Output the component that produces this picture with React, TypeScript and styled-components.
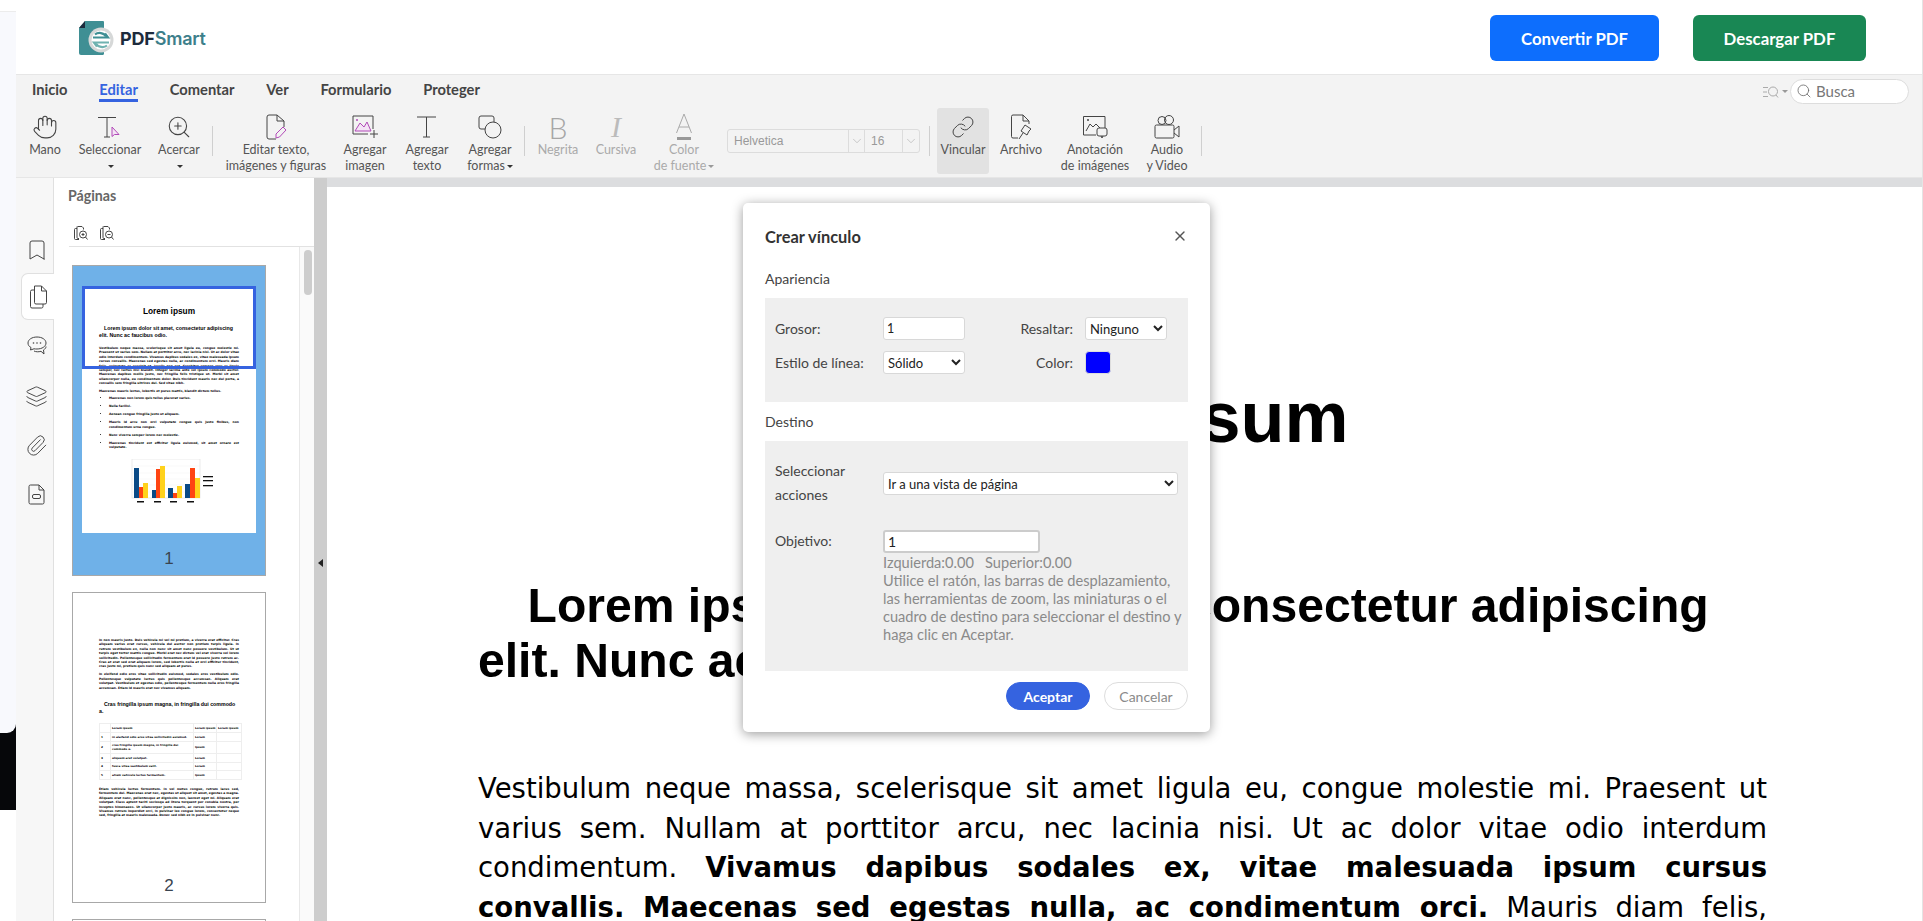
import React from 'react';
import styled, { createGlobalStyle } from 'styled-components';
import {
    Bookmark,
    ChevronDown,
    Hand,
    Layers,
    Link,
    Paperclip,
    Search,
    X,
    ZoomIn,
} from 'lucide-react';

const UI_FONT = "Lato, 'Noto Sans', sans-serif";

const GlobalStyle = createGlobalStyle`
    html, body {
        margin: 0;
        height: 100%;
        overflow: hidden;
        background: #fff;
    }
    * { box-sizing: border-box; }
    body { font-family: ${UI_FONT}; }
`;

const Page = styled.div`
    position: relative;
    display: flex;
    width: 100vw;
    height: 100vh;
    overflow: hidden;
    border-right: 1px solid #e4e4e4;
`;

const LeftEdge = styled.div`
    flex: 0 0 16px;
    display: flex;
    flex-direction: column;
    background: #fff;
`;

const EdgeLight = styled.div`
    position: relative;
    height: 722px;
    margin-top: 11px;
    background: #f8f9fd;
    border-top: 1px solid #ececec;
    border-bottom-right-radius: 9px;
`;

const EdgeDark = styled.div`
    height: 86px;
    margin-top: -9px;
    background: #06070a;
`;

const Main = styled.div`
    flex: 1;
    min-width: 0;
    display: flex;
    flex-direction: column;
`;

const Header = styled.header`
    flex: 0 0 75px;
    display: flex;
    align-items: flex-start;
    justify-content: space-between;
    padding: 15px 56px 0 63px;
    background: #fff;
    border-bottom: 1px solid #e6e6e6;
`;

const Logo = styled.div`
    display: flex;
    align-items: center;
    gap: 6px;
    margin-top: 6px;
`;

const LogoText = styled.div`
    font-family: Inter, sans-serif;
    font-weight: 700;
    font-size: 18px;
    letter-spacing: -0.2px;
    color: #1d2b3d;
`;

const LogoAccent = styled.span`
    color: #3d7f8b;
    font-weight: 600;
`;

const HeaderActions = styled.div`
    display: flex;
    gap: 34px;
`;

const CtaButton = styled.button<{ $tone: string; $width: number }>`
    width: ${({ $width }) => $width}px;
    height: 46px;
    border: 0;
    border-radius: 6px;
    background: ${({ $tone }) => $tone};
    color: #fff;
    font-family: ${UI_FONT};
    font-size: 16.8px;
    font-weight: 700;
`;

const Ribbon = styled.div`
    flex: 0 0 103px;
    display: flex;
    flex-direction: column;
    background: #f3f3f3;
    border-bottom: 1px solid #e6e6e6;
`;

const NavRow = styled.nav`
    height: 33px;
    display: flex;
    align-items: flex-start;
    gap: 31.8px;
    padding: 5px 0 0 16px;
`;

const NavItem = styled.span<{ $active?: boolean }>`
    height: 22px;
    font-size: 14.7px;
    line-height: 18px;
    font-weight: 700;
    color: ${({ $active }) => ($active ? '#3563e0' : '#444')};
    border-bottom: ${({ $active }) => ($active ? '3px solid #3563e0' : '0')};
`;

const NavTail = styled.div`
    margin-left: auto;
    display: flex;
    align-items: center;
    margin-top: -1px;
    color: #aaa;
`;

const ViewToggle = styled.div`
    display: flex;
    align-items: center;
    width: 27px;
    overflow: hidden;
`;

const SmallCaret = styled.i<{ $color?: string }>`
    display: inline-block;
    flex: none;
    margin-left: 2px;
    vertical-align: middle;
    border-left: 3px solid transparent;
    border-right: 3px solid transparent;
    border-top: 3.5px solid ${({ $color }) => $color ?? '#333'};
`;

const SearchBox = styled.div`
    width: 119px;
    height: 25px;
    display: flex;
    align-items: center;
    gap: 4px;
    padding: 0 0 2px 5px;
    background: #fff;
    border: 1px solid #ddd;
    border-radius: 13px;
    font-size: 15px;
    color: #777;
`;

const MoreDots = styled.span`
    width: 13px;
    padding-left: 11px;
    font-size: 14px;
    line-height: 1;
    color: #888;
    overflow: hidden;
`;

const ToolRow = styled.div`
    display: flex;
    align-items: flex-start;
`;

const Tool = styled.div<{ $w: number; $disabled?: boolean; $selected?: boolean; $ml?: number }>`
    flex: 0 0 ${({ $w }) => $w}px;
    height: 66px;
    margin-left: ${({ $ml }) => $ml ?? 0}px;
    display: flex;
    flex-direction: column;
    align-items: center;
    border-radius: 3px;
    font-size: 12.5px;
    line-height: 16px;
    text-align: center;
    white-space: nowrap;
    color: ${({ $disabled }) => ($disabled ? '#aaa' : '#555')};
    background: ${({ $selected }) => ($selected ? '#e2e2e2' : 'transparent')};
`;

const IconSlot = styled.div`
    flex: 0 0 34px;
    display: flex;
    align-items: center;
    justify-content: center;
    padding-top: 3px;
`;

const LetterIcon = styled.span<{ $italic?: boolean }>`
    font-family: ${({ $italic }) => ($italic ? "'Liberation Serif', serif" : UI_FONT)};
    font-style: ${({ $italic }) => ($italic ? 'italic' : 'normal')};
    font-weight: 300;
    font-size: 30px;
    line-height: 30px;
    color: ${({ $italic }) => ($italic ? '#bbb' : '#a6a6a6')};
`;

const ToolSep = styled.div<{ $ml?: number }>`
    flex: 0 0 1px;
    height: 30px;
    margin: 18px 0 0 ${({ $ml }) => $ml ?? 0}px;
    background: #cfcfcf;
`;

const FontPicker = styled.div`
    flex: 0 0 192px;
    height: 24px;
    margin-top: 21px;
    display: flex;
    align-items: center;
    border: 1px solid #dcdcdc;
    border-radius: 3px;
    font-family: 'Liberation Sans', sans-serif;
    font-size: 12px;
    color: #999;
`;

const FontField = styled.span<{ $w: number }>`
    flex: 0 0 ${({ $w }) => $w}px;
    padding-left: 6px;
`;

const FontArrow = styled.span`
    flex: 0 0 17px;
    height: 100%;
    display: flex;
    align-items: center;
    justify-content: center;
    border-left: 1px solid #dcdcdc;
    border-right: 1px solid #dcdcdc;
    color: #b5b5b5;
    &:last-child { border-right: 0; }
`;

const Workspace = styled.div`
    flex: 1;
    min-height: 0;
    display: flex;
`;

const Rail = styled.aside`
    flex: 0 0 38px;
    display: flex;
    flex-direction: column;
    align-items: center;
    padding-top: 59px;
    background: #f7f7f7;
    border-right: 1px solid #e0e0e0;
    color: #444;
`;

const RailItem = styled.div<{ $active?: boolean; $gap: number }>`
    flex: 0 0 47px;
    width: ${({ $active }) => ($active ? '33px' : '100%')};
    margin-top: ${({ $gap }) => $gap}px;
    align-self: flex-end;
    margin-right: ${({ $active }) => ($active ? '-1px' : '0')};
    display: flex;
    align-items: center;
    justify-content: center;
    padding-left: ${({ $active }) => ($active ? '0' : '4px')};
    ${({ $active }) =>
        $active &&
        `
        background: #fff;
        border: 1px solid #e0e0e0;
        border-right: 0;
        border-radius: 7px 0 0 7px;
    `}
`;

const PagesPanel = styled.section`
    flex: 0 0 259px;
    display: flex;
    flex-direction: column;
    padding-left: 15px;
    background: #fff;
`;

const PanelTitle = styled.h3`
    margin: 0;
    padding-top: 10px;
    margin-left: -1px;
    font-size: 14.2px;
    line-height: 16px;
    font-weight: 700;
    color: #666;
`;

const PanelTools = styled.div`
    height: 43px;
    display: flex;
    gap: 12px;
    padding: 22px 0 0 5px;
    color: #444;
    border-bottom: 1px solid #e2e2e2;
`;

const ThumbScroller = styled.div`
    flex: 1;
    min-height: 0;
    display: flex;
    overflow: hidden;
`;

const ThumbList = styled.div`
    flex: 0 0 230px;
    padding: 18px 0 0 3px;
    display: flex;
    flex-direction: column;
    gap: 16px;
`;

const ScrollTrack = styled.div`
    flex: 1;
    padding: 3px 2px 0 4px;
    background: #fafafa;
    border-left: 1px solid #e8e8e8;
`;

const ScrollThumb = styled.div`
    width: 8px;
    height: 45px;
    border-radius: 4px;
    background: #cdcdcd;
`;

const Thumb = styled.div<{ $active?: boolean }>`
    position: relative;
    flex: 0 0 311px;
    width: 194px;
    padding: 20px 9px 0;
    border: 1px solid #a8a8a8;
    background: ${({ $active }) => ($active ? '#6fb1e8' : '#fff')};
`;

const ThumbPage = styled.div<{ $pad: number }>`
    position: relative;
    height: 247px;
    padding: ${({ $pad }) => $pad}px 17px 0;
    background: #fff;
    font-family: 'DejaVu Sans', sans-serif;
    font-size: 3.03px;
    line-height: 4.4px;
    font-weight: 700;
    color: #000;
`;

const ViewFrame = styled.div`
    position: absolute;
    left: 0;
    top: 0;
    width: 100%;
    height: 83px;
    border: 3px solid #3563e0;
`;

const ThumbNumber = styled.div`
    position: absolute;
    left: 0;
    right: 0;
    bottom: 6px;
    text-align: center;
    font-family: 'Liberation Sans', sans-serif;
    font-size: 17px;
    line-height: 20px;
    color: #3a4450;
`;

const ThumbTitle = styled.div`
    text-align: center;
    font-family: 'Liberation Sans', sans-serif;
    font-size: 8.3px;
    line-height: 12px;
`;

const ThumbHeading = styled.div<{ $top: number }>`
    margin-top: ${({ $top }) => $top}px;
    text-indent: 5px;
    font-family: 'Liberation Sans', sans-serif;
    font-size: 5.25px;
    line-height: 7px;
`;

const ThumbText = styled.p<{ $top: number }>`
    margin: ${({ $top }) => $top}px 0 0;
    text-align: justify;
`;

const ThumbBullets = styled.ul`
    margin: 3px 0 0;
    padding-left: 10px;
    text-align: justify;
`;

const ThumbBullet = styled.li`
    padding-bottom: 3.7px;
`;

const ThumbChart = styled.svg`
    display: block;
    margin: 6px 0 0 28px;
`;

const ThumbTable = styled.table`
    width: 143px;
    margin-top: 8px;
    border-collapse: collapse;
    table-layout: fixed;
    font-size: 2.8px;
    line-height: 4.2px;
`;

const ThumbCell = styled.td<{ $h?: number; $w?: number }>`
    height: ${({ $h }) => $h ?? 9}px;
    width: ${({ $w }) => ($w ? `${$w}px` : 'auto')};
    padding: 0 1px;
    border: 1px solid #eee;
    vertical-align: middle;
    overflow: hidden;
    white-space: ${({ $w }) => ($w ? 'nowrap' : 'normal')};
`;

const CollapseBar = styled.div`
    flex: 0 0 13px;
    position: relative;
    background: #cdcdcd;
`;

const CollapseArrow = styled.i`
    position: absolute;
    left: 4px;
    top: 381px;
    border-top: 4px solid transparent;
    border-bottom: 4px solid transparent;
    border-right: 5px solid #222;
`;

const DocViewer = styled.main`
    flex: 1;
    min-width: 0;
    overflow: hidden;
    padding: 180px 155px 0 151px;
    background: #fff;
    border-top: 9px solid #dcdddf;
    color: #000;
`;

const DocTitle = styled.h1`
    margin: 0;
    text-align: center;
    font-family: 'Liberation Sans', sans-serif;
    font-size: 72px;
    line-height: 100px;
    font-weight: 700;
`;

const DocHeading = styled.h2`
    margin: 111px 0 0;
    text-indent: 49.500px;
    font-family: 'Liberation Sans', sans-serif;
    font-size: 48.100px;
    line-height: 54.500px;
    font-weight: 700;
`;

const DocBody = styled.p`
    margin: 82px 0 0;
    text-align: justify;
    font-family: 'DejaVu Sans', sans-serif;
    font-size: 27.500px;
    line-height: 39.500px;
`;

const Dialog = styled.div`
    position: absolute;
    left: 743px;
    top: 203px;
    width: 467px;
    height: 529px;
    padding: 0 22px;
    background: #fff;
    border-radius: 5px;
    box-shadow: 0 2px 12px rgba(0, 0, 0, 0.4);
    font-size: 14px;
    color: #444;
`;

const DialogHead = styled.div`
    height: 68px;
    display: flex;
    align-items: center;
    justify-content: space-between;
    padding-bottom: 2px;
`;

const DialogTitle = styled.h2`
    margin: 0;
    font-size: 16.400px;
    font-weight: 700;
    color: #333;
`;

const SectionLabel = styled.div`
    height: 27px;
    font-size: 14px;
    line-height: 16px;
    color: #444;
`;

const SectionBox = styled.div`
    background: #efefef;
`;

const LookGrid = styled(SectionBox)`
    height: 104px;
    margin-bottom: 12px;
    display: grid;
    grid-template-columns: 108px 82px 120px 82px;
    grid-auto-rows: 23px;
    row-gap: 11px;
    align-items: center;
    padding: 19px 0 0 10px;
`;

const RightLabel = styled.label`
    padding-right: 12px;
    text-align: right;
`;

const Field = styled.input<{ $w?: number; $thick?: boolean }>`
    width: ${({ $w }) => ($w ? `${$w}px` : '100%')};
    height: 23px;
    padding: 0 3px;
    border: ${({ $thick }) => ($thick ? '2px solid #ccc' : '1px solid #d8d8d8')};
    border-radius: 3px;
    background: #fff;
    font-family: ${UI_FONT};
    font-size: ${({ $thick }) => ($thick ? '14px' : '12.500px')};
    color: #222;
    outline: none;
`;

const Dropdown = styled.select`
    width: 100%;
    height: 23px;
    padding: 0;
    border: 1px solid #d8d8d8;
    border-radius: 3px;
    background: #fff;
    font-family: ${UI_FONT};
    font-size: 13px;
    color: #222;
`;

const Swatch = styled.div`
    width: 26px;
    height: 23px;
    background: #0000ff;
    border: 1px solid #ddd;
    border-radius: 4px;
`;

const TargetBox = styled(SectionBox)`
    height: 230px;
    padding: 18px 10px 0;
`;

const ActionRow = styled.div`
    display: flex;
    height: 71px;
`;

const ActionLabel = styled.label`
    flex: 0 0 108px;
    line-height: 24px;
`;

const ActionField = styled.div`
    flex: 1;
    padding-top: 13px;
`;

const GoalRow = styled.div`
    display: flex;
`;

const GoalLabel = styled.label`
    flex: 0 0 108px;
    padding-top: 2px;
`;

const GoalHint = styled.div`
    margin-top: 1px;
    font-size: 14.600px;
    line-height: 18px;
    white-space: nowrap;
    color: #8a8a8a;
`;

const DialogFoot = styled.div`
    display: flex;
    justify-content: flex-end;
    gap: 14px;
    padding-top: 11px;
`;

const PillButton = styled.button<{ $primary?: boolean }>`
    width: 84px;
    height: 28px;
    padding: 0;
    border-radius: 14px;
    border: 1px solid ${({ $primary }) => ($primary ? '#3563e0' : '#ddd')};
    background: ${({ $primary }) => ($primary ? '#3563e0' : '#fff')};
    color: ${({ $primary }) => ($primary ? '#fff' : '#8a8a8a')};
    font-family: ${UI_FONT};
    font-size: 14px;
    font-weight: ${({ $primary }) => ($primary ? 700 : 400)};
`;

const INK = '#444';

const LogoMark = () => (
    <svg width="35" height="35" viewBox="0 0 35 35">
        <path d="M6 0H24a1 1 0 0 1 1 1V33a2 2 0 0 1-1 1H2a2 2 0 0 1-2-2V7Z" fill="#3f8f94" />
        <path d="M6 0V7H0Z" fill="#1d2b3d" />
        <circle cx="22" cy="19" r="12.500" fill="#d6d8d8" />
        <circle cx="22" cy="19" r="9.500" fill="#fff" />
        <path d="M16 13.500C19 11 25 11.500 27 15.500" fill="none" stroke="#3f8f94" strokeWidth="2.200" />
        <path d="M14 16.500H29L26 12.500" fill="none" stroke="#3f8f94" strokeWidth="2.200" />
        <path d="M30 21.500H15L18 25.500" fill="none" stroke="#6fb2b0" strokeWidth="2.200" />
        <path d="M28 24.500C25 27 19 26.500 17 22.500" fill="none" stroke="#6fb2b0" strokeWidth="2.200" />
    </svg>
);

const SelectIcon = () => (
    <svg width="26" height="24" viewBox="0 0 26 24" fill="none" stroke={INK}>
        <path d="M1 2.500H19M10 2.500V22M7 22H13" />
        <path d="M15 12V21.500L17.500 19.500H22Z" stroke="#b24ab8" fill="#f4e4f6" />
    </svg>
);

const EditDocIcon = () => (
    <svg width="24" height="26" viewBox="0 0 24 26" fill="none" stroke={INK}>
        <path d="M12 25H5a2 2 0 0 1-2-2V3a2 2 0 0 1 2-2H13L20 7V13" />
        <path d="M13 1V7H20" />
        <path d="M12 24V20L19 13L22 16L15.500 23Z" stroke="#b24ab8" />
    </svg>
);

const AddImageIcon = () => (
    <svg width="28" height="24" viewBox="0 0 28 24" fill="none" stroke={INK}>
        <path d="M17 19H2V1H22V14" />
        <path d="M4 16L9 8L13 12L16 7L20 16Z" stroke="#b24ab8" fill="#f4e4f6" />
        <circle cx="6" cy="5" r="1" fill="#b24ab8" stroke="none" />
        <path d="M23 15V23M19 19H27" />
    </svg>
);

const TextToolIcon = () => (
    <svg width="22" height="24" viewBox="0 0 22 24" fill="none" stroke={INK}>
        <path d="M1 2H20M10.500 2V22M7 22H14" />
    </svg>
);

const ShapesIcon = () => (
    <svg width="26" height="24" viewBox="0 0 26 24" fill="none" stroke={INK}>
        <rect x="2" y="1" width="15" height="13" rx="2" />
        <circle cx="16" cy="15" r="8" fill="#f3f3f3" />
    </svg>
);

const FontColorIcon = () => (
    <svg width="20" height="28" viewBox="0 0 20 28" fill="none" stroke="#aaa">
        <path d="M2.500 20L10 1L17.500 20M5 14H15" />
        <path d="M3 25.500H17" strokeWidth="3" stroke="#999" />
    </svg>
);

const PinDocIcon = () => (
    <svg width="22" height="26" viewBox="0 0 22 26" fill="none" stroke={INK}>
        <path d="M8 24H3a1.500 1.500 0 0 1-1.500-1.500V2.500A1.500 1.500 0 0 1 3 1H13L19 7V10" />
        <path d="M13 1V7H19" />
        <path d="M15 11L21 15L19 17L17 21L11 17L13 14ZM13 19L9 25" />
    </svg>
);

const AnnotateIcon = () => (
    <svg width="26" height="24" viewBox="0 0 26 24" fill="none" stroke={INK}>
        <path d="M14 20H1.500V1.500H23V13" />
        <path d="M4 16L8 9L11 12L14 9L18 13" />
        <circle cx="6" cy="5" r="1" fill={INK} stroke="none" />
        <rect x="15" y="13" width="10" height="8" rx="2" fill="#f3f3f3" />
        <path d="M19 21L20 23L21 21" />
    </svg>
);

const CameraIcon = () => (
    <svg width="26" height="24" viewBox="0 0 26 24" fill="none" stroke={INK}>
        <circle cx="8" cy="5.500" r="4" />
        <circle cx="15" cy="5" r="4.500" />
        <rect x="1" y="10" width="19" height="13" rx="1.500" />
        <path d="M20 15L25 11V22L20 18" />
    </svg>
);

const ViewModeIcon = () => (
    <svg width="17" height="14" viewBox="0 0 17 14" fill="none" stroke="#aaa">
        <path d="M0 2.500H5M0 7H4M0 11.500H5" />
        <circle cx="10" cy="6.500" r="4.500" />
        <path d="M13 10L15 12.500" />
    </svg>
);

const PagesIcon = () => (
    <svg width="19" height="24" viewBox="0 0 19 24" fill="none" stroke={INK}>
        <path d="M5.500 1H12.500L17.500 6V17.500A1.500 1.500 0 0 1 16 19H7A1.500 1.500 0 0 1 5.500 17.500Z" />
        <path d="M12.500 1V6H17.500" />
        <path d="M5.500 5H3A1.500 1.500 0 0 0 1.500 6.500V21.500A1.500 1.500 0 0 0 3 23H12.500A1.500 1.500 0 0 0 14 21.500V19" />
    </svg>
);

const ChatIcon = () => (
    <svg width="20" height="19" viewBox="0 0 20 19" fill="none" stroke={INK}>
        <path d="M10 1C5 1 1 3.500 1 7C1 9 2 10.500 4 11.500L3.500 14L7 12.800C8 13 9 13 10 13C15 13 19 10.500 19 7C19 3.500 15 1 10 1Z" />
        <path d="M7 15C9 16 11.500 16 14 15.300L17 18L16.500 14C18 13 19 12 19 10.500" />
        <circle cx="6.500" cy="7" r=".8" fill={INK} stroke="none" />
        <circle cx="10" cy="7" r=".8" fill={INK} stroke="none" />
        <circle cx="13.500" cy="7" r=".8" fill={INK} stroke="none" />
    </svg>
);

const DocMinusIcon = () => (
    <svg width="17" height="21" viewBox="0 0 17 21" fill="none" stroke={INK}>
        <path d="M2.500 1H11L16 6V18.500A1.500 1.500 0 0 1 14.500 20H2.500A1.500 1.500 0 0 1 1 18.500V2.500A1.500 1.500 0 0 1 2.500 1Z" />
        <path d="M11 1V6H16" />
        <rect x="4.500" y="10.500" width="8" height="4" rx="1.500" />
    </svg>
);

const PageZoomIcon = ({ plus }: { plus?: boolean }) => (
    <svg width="14" height="14" viewBox="0 0 14 14" fill="none" stroke={INK}>
        <path d="M3.500 .5H8L9.500 2V3.500M5 12.500H4A1 1 0 0 1 3 11.500V.5" />
        <path d="M3 2.500H1.500A1 1 0 0 0 .5 3.500V12.500A1 1 0 0 0 1.500 13.500H5" />
        <circle cx="9" cy="8.500" r="3.500" />
        <path d="M11.500 11L13.500 13.500M7.500 8.500H10.500" />
        {plus && <path d="M9 7V10" />}
    </svg>
);

const ChartMini = () => (
    <ThumbChart width="92" height="47" viewBox="0 0 92 47">
        <rect x="5" y="0" width="68" height="39" fill="#fff" stroke="#e2e2e2" strokeWidth=".7" />
        <path d="M5 7H73M5 14H73M5 20H73M5 26H73M5 33H73" stroke="#f0f0f0" strokeWidth=".5" />
        <g fill="#0a4a86">
            <rect x="7" y="9" width="5" height="30" />
            <rect x="25" y="31" width="4" height="8" />
            <rect x="41" y="29" width="5" height="10" />
            <rect x="58" y="25" width="5" height="14" />
        </g>
        <g fill="#ff4412">
            <rect x="12" y="28" width="4" height="11" />
            <rect x="29" y="10" width="4" height="29" />
            <rect x="46" y="34" width="4" height="5" />
            <rect x="63" y="9" width="5" height="30" />
        </g>
        <g fill="#ffd21c">
            <rect x="16" y="24" width="5" height="15" />
            <rect x="33" y="7" width="5" height="32" />
            <rect x="50" y="27" width="5" height="12" />
            <rect x="68" y="19" width="5" height="20" />
        </g>
        <g fill="#111">
            <rect x="10" y="42" width="7" height="1.500" />
            <rect x="27" y="42" width="7" height="1.500" />
            <rect x="43" y="42" width="7" height="1.500" />
            <rect x="60" y="42" width="7" height="1.500" />
            <rect x="76" y="17" width="10" height="1.300" />
            <rect x="76" y="21" width="10" height="1.300" />
            <rect x="76" y="26" width="10" height="1.300" />
        </g>
    </ThumbChart>
);

const tableRows: [string, string, number][] = [
    ['in eleifend odio eros vitae sollicitudin euismod.', 'Lorem', 9],
    ['cras fringilla ipsum magna, in fringilla dui commodo a.', 'Ipsum', 12],
    ['aliquam erat volutpat.', 'Lorem', 9],
    ['fusce vitae vestibulum velit.', 'Lorem', 8],
    ['etiam vehicula luctus fermentum.', 'Ipsum', 9],
];

const Toolbar = () => (
    <ToolRow>
        <Tool $w={58}>
            <IconSlot><Hand size={26} strokeWidth={1} color={INK} /></IconSlot>
            Mano
        </Tool>
        <Tool $w={72}>
            <IconSlot><SelectIcon /></IconSlot>
            Seleccionar
            <div><SmallCaret /></div>
        </Tool>
        <Tool $w={66}>
            <IconSlot><ZoomIn size={26} strokeWidth={1} color={INK} /></IconSlot>
            Acercar
            <div><SmallCaret /></div>
        </Tool>
        <ToolSep />
        <Tool $w={126}>
            <IconSlot><EditDocIcon /></IconSlot>
            Editar texto,
            <br />
            imágenes y figuras
        </Tool>
        <Tool $w={52}>
            <IconSlot><AddImageIcon /></IconSlot>
            Agregar
            <br />
            imagen
        </Tool>
        <Tool $w={72}>
            <IconSlot><TextToolIcon /></IconSlot>
            Agregar
            <br />
            texto
        </Tool>
        <Tool $w={54}>
            <IconSlot><ShapesIcon /></IconSlot>
            Agregar
            <div>formas<SmallCaret /></div>
        </Tool>
        <ToolSep $ml={7} />
        <Tool $w={66} $disabled>
            <IconSlot><LetterIcon>B</LetterIcon></IconSlot>
            Negrita
        </Tool>
        <Tool $w={50} $disabled>
            <IconSlot><LetterIcon $italic>I</LetterIcon></IconSlot>
            Cursiva
        </Tool>
        <Tool $w={86} $disabled>
            <IconSlot><FontColorIcon /></IconSlot>
            Color
            <div>de fuente<SmallCaret $color="#999" /></div>
        </Tool>
        <FontPicker>
            <FontField $w={120}>Helvetica</FontField>
            <FontArrow><ChevronDown size={14} strokeWidth={1.2} /></FontArrow>
            <FontField $w={37}>16</FontField>
            <FontArrow><ChevronDown size={14} strokeWidth={1.2} /></FontArrow>
        </FontPicker>
        <ToolSep $ml={9} />
        <Tool $w={52} $ml={7} $selected>
            <IconSlot><Link size={24} strokeWidth={1} color={INK} /></IconSlot>
            Vincular
        </Tool>
        <Tool $w={64}>
            <IconSlot><PinDocIcon /></IconSlot>
            Archivo
        </Tool>
        <Tool $w={84}>
            <IconSlot><AnnotateIcon /></IconSlot>
            Anotación
            <br />
            de imágenes
        </Tool>
        <Tool $w={60}>
            <IconSlot><CameraIcon /></IconSlot>
            Audio
            <br />
            y Video
        </Tool>
        <ToolSep $ml={4} />
    </ToolRow>
);

const FirstThumb = () => (
    <Thumb $active>
        <ThumbPage $pad={19}>
            <ThumbTitle>Lorem ipsum</ThumbTitle>
            <ThumbHeading $top={8}>
                Lorem ipsum dolor sit amet, consectetur adipiscing elit. Nunc ac faucibus odio.
            </ThumbHeading>
            <ThumbText $top={7}>
                Vestibulum neque massa, scelerisque sit amet ligula eu, congue molestie mi. Praesent ut varius
                sem. Nullam at porttitor arcu, nec lacinia nisi. Ut ac dolor vitae odio interdum condimentum.
                Vivamus dapibus sodales ex, vitae malesuada ipsum cursus convallis. Maecenas sed egestas nulla,
                ac condimentum orci. Mauris diam felis, vulputate ac suscipit et, iaculis non est. Curabitur
                semper arcu ac ligula semper, nec luctus nisl blandit. Integer lacinia ante vel ipsum commodo
                auctor. Maecenas dapibus mollis justo, nec fringilla felis tristique ut. Morbi sit amet
                ullamcorper nulla, eu condimentum dolor. Duis tincidunt mauris nec dui porta, a convallis sem
                fringilla ultrices dui. Sed vitae nibh.
            </ThumbText>
            <ThumbText $top={3}>Maecenas mauris lectus, lobortis et purus mattis, blandit dictum tellus.</ThumbText>
            <ThumbBullets>
                <ThumbBullet>Maecenas non lorem quis tellus placerat varius.</ThumbBullet>
                <ThumbBullet>Nulla facilisi.</ThumbBullet>
                <ThumbBullet>Aenean congue fringilla justo ut aliquam.</ThumbBullet>
                <ThumbBullet>Mauris id arcu non orci vulputate congue quis justo finibus, non condimentum urna congue.</ThumbBullet>
                <ThumbBullet>Nunc viverra semper lorem nec molestie.</ThumbBullet>
                <ThumbBullet>Maecenas tincidunt est efficitur ligula euismod, sit amet ornare est vulputate.</ThumbBullet>
            </ThumbBullets>
            <ChartMini />
            <ViewFrame />
        </ThumbPage>
        <ThumbNumber>1</ThumbNumber>
    </Thumb>
);

const SecondThumb = () => (
    <Thumb>
        <ThumbPage $pad={25}>
            <ThumbText $top={0}>
                In non mauris justo. Duis vehicula mi vel mi pretium, a viverra erat efficitur. Cras aliquam
                varius erat cursus, vehicula dui auctor non pretium turpis ligula. In rutrum vestibulum ex,
                nulla non nunc sit amet nunc posuere vestibulum. Ut ut turpis eget tortor mattis congue. Morbi
                erat nec dictum vel erat viverra vel lorem sollicitudin. Pellentesque sollicitudin fermentum
                erat id posuere justo rutrum ac. Cras at erat sed erat aliquam lorem, sed lobortis nulla at
                orci efficitur tincidunt, cras justo mi, pretium quis nunc sed aliquam at purus.
            </ThumbText>
            <ThumbText $top={3.5}>
                In eleifend odio eros vitae sollicitudin euismod, sodales eros vestibulum odio. Pellentesque
                vulputate luctus quis pellentesque accumsan. Aliquam erat volutpat. Vestibulum et egestas odio,
                pellentesque fermentum nulla eros fringilla accumsan. Etiam id mauris erat nec vivamus aliquam.
            </ThumbText>
            <ThumbHeading $top={11}>Cras fringilla ipsum magna, in fringilla dui commodo a.</ThumbHeading>
            <ThumbTable>
                <tbody>
                    <tr>
                        <ThumbCell $w={11} />
                        <ThumbCell $w={83}>Lorem ipsum</ThumbCell>
                        <ThumbCell $w={23}>Lorem ipsum</ThumbCell>
                        <ThumbCell $w={25}>Lorem ipsum</ThumbCell>
                    </tr>
                    {tableRows.map(([text, val, h], i) => (
                        <tr key={text}>
                            <ThumbCell $h={h}>{i + 1}</ThumbCell>
                            <ThumbCell $h={h}>{text}</ThumbCell>
                            <ThumbCell $h={h}>{val}</ThumbCell>
                            <ThumbCell $h={h} />
                        </tr>
                    ))}
                </tbody>
            </ThumbTable>
            <ThumbText $top={7}>
                Etiam vehicula luctus fermentum. In vel metus congue, rutrum lacus sed, fermentum dui. Maecenas
                erat nec, egestas ut aliquet sit amet, egestas a magna. Aliquam erat nunc, pellentesque at
                dignissim non, laoreet eget mi. Aliquam erat volutpat. Class aptent taciti sociosqu ad litora
                torquent per conubia nostra, per inceptos himenaeos. Ut ullamcorper justo mauris, ac cursus
                lorem viverra quis. Vivamus rutrum imperdiet orci, in pulvinar leo congue lorem, consectetur
                neque sed, fringilla at mauris malesuada. Donec sed nibh ex in pulvinar nunc.
            </ThumbText>
        </ThumbPage>
        <ThumbNumber>2</ThumbNumber>
    </Thumb>
);

const LinkDialog = () => (
    <Dialog>
        <DialogHead>
            <DialogTitle>Crear vínculo</DialogTitle>
            <X size={16} strokeWidth={2} color="#555" />
        </DialogHead>
        <SectionLabel>Apariencia</SectionLabel>
        <LookGrid>
            <label>Grosor:</label>
            <Field defaultValue="1" />
            <RightLabel>Resaltar:</RightLabel>
            <Dropdown defaultValue="Ninguno">
                <option>Ninguno</option>
            </Dropdown>
            <label>Estilo de línea:</label>
            <Dropdown defaultValue="Sólido">
                <option>Sólido</option>
            </Dropdown>
            <RightLabel>Color:</RightLabel>
            <Swatch />
        </LookGrid>
        <SectionLabel>Destino</SectionLabel>
        <TargetBox>
            <ActionRow>
                <ActionLabel>
                    Seleccionar
                    <br />
                    acciones
                </ActionLabel>
                <ActionField>
                    <Dropdown defaultValue="Ir a una vista de página">
                        <option>Ir a una vista de página</option>
                    </Dropdown>
                </ActionField>
            </ActionRow>
            <GoalRow>
                <GoalLabel>Objetivo:</GoalLabel>
                <div>
                    <Field $w={157} $thick defaultValue="1" />
                    <GoalHint>
                        Izquierda:0.00&nbsp;&nbsp; Superior:0.00
                        <br />
                        Utilice el ratón, las barras de desplazamiento,
                        <br />
                        las herramientas de zoom, las miniaturas o el
                        <br />
                        cuadro de destino para seleccionar el destino y
                        <br />
                        haga clic en Aceptar.
                    </GoalHint>
                </div>
            </GoalRow>
        </TargetBox>
        <DialogFoot>
            <PillButton $primary>Aceptar</PillButton>
            <PillButton>Cancelar</PillButton>
        </DialogFoot>
    </Dialog>
);

export default function App() {
    return (
        <Page>
            <GlobalStyle />
            <LeftEdge>
                <EdgeLight />
                <EdgeDark />
            </LeftEdge>
            <Main>
                <Header>
                    <Logo>
                        <LogoMark />
                        <LogoText>
                            PDF<LogoAccent>Smart</LogoAccent>
                        </LogoText>
                    </Logo>
                    <HeaderActions>
                        <CtaButton $tone="#0d6efd" $width={169}>Convertir PDF</CtaButton>
                        <CtaButton $tone="#198754" $width={173}>Descargar PDF</CtaButton>
                    </HeaderActions>
                </Header>
                <Ribbon>
                    <NavRow>
                        <NavItem>Inicio</NavItem>
                        <NavItem $active>Editar</NavItem>
                        <NavItem>Comentar</NavItem>
                        <NavItem>Ver</NavItem>
                        <NavItem>Formulario</NavItem>
                        <NavItem>Proteger</NavItem>
                        <NavTail>
                            <ViewToggle>
                                <ViewModeIcon />
                                <SmallCaret $color="#999" />
                            </ViewToggle>
                            <SearchBox>
                                <Search size={16} strokeWidth={1.2} color="#666" />
                                Busca
                            </SearchBox>
                            <MoreDots>⋮</MoreDots>
                        </NavTail>
                    </NavRow>
                    <Toolbar />
                </Ribbon>
                <Workspace>
                    <Rail>
                        <RailItem $gap={-11}><Bookmark size={24} strokeWidth={1} /></RailItem>
                        <RailItem $gap={0} $active><PagesIcon /></RailItem>
                        <RailItem $gap={2}><ChatIcon /></RailItem>
                        <RailItem $gap={4}><Layers size={23} strokeWidth={1} /></RailItem>
                        <RailItem $gap={2}><Paperclip size={23} strokeWidth={1} /></RailItem>
                        <RailItem $gap={2}><DocMinusIcon /></RailItem>
                    </Rail>
                    <PagesPanel>
                        <PanelTitle>Páginas</PanelTitle>
                        <PanelTools>
                            <PageZoomIcon plus />
                            <PageZoomIcon />
                        </PanelTools>
                        <ThumbScroller>
                            <ThumbList>
                                <FirstThumb />
                                <SecondThumb />
                                <Thumb />
                            </ThumbList>
                            <ScrollTrack>
                                <ScrollThumb />
                            </ScrollTrack>
                        </ThumbScroller>
                    </PagesPanel>
                    <CollapseBar>
                        <CollapseArrow />
                    </CollapseBar>
                    <DocViewer>
                        <DocTitle>Lorem ipsum</DocTitle>
                        <DocHeading>
                            Lorem ipsum dolor sit amet, consectetur adipiscing elit. Nunc ac faucibus odio.
                        </DocHeading>
                        <DocBody>
                            Vestibulum neque massa, scelerisque sit amet ligula eu, congue molestie mi. Praesent ut
                            varius sem. Nullam at porttitor arcu, nec lacinia nisi. Ut ac dolor vitae odio interdum
                            condimentum. <b>Vivamus dapibus sodales ex, vitae malesuada ipsum cursus convallis.
                            Maecenas sed egestas nulla, ac condimentum orci.</b> Mauris diam felis, vulputate ac
                            suscipit et, iaculis non est. Curabitur semper arcu ac ligula semper, nec luctus nisl
                            blandit.
                        </DocBody>
                    </DocViewer>
                </Workspace>
            </Main>
            <LinkDialog />
        </Page>
    );
}
